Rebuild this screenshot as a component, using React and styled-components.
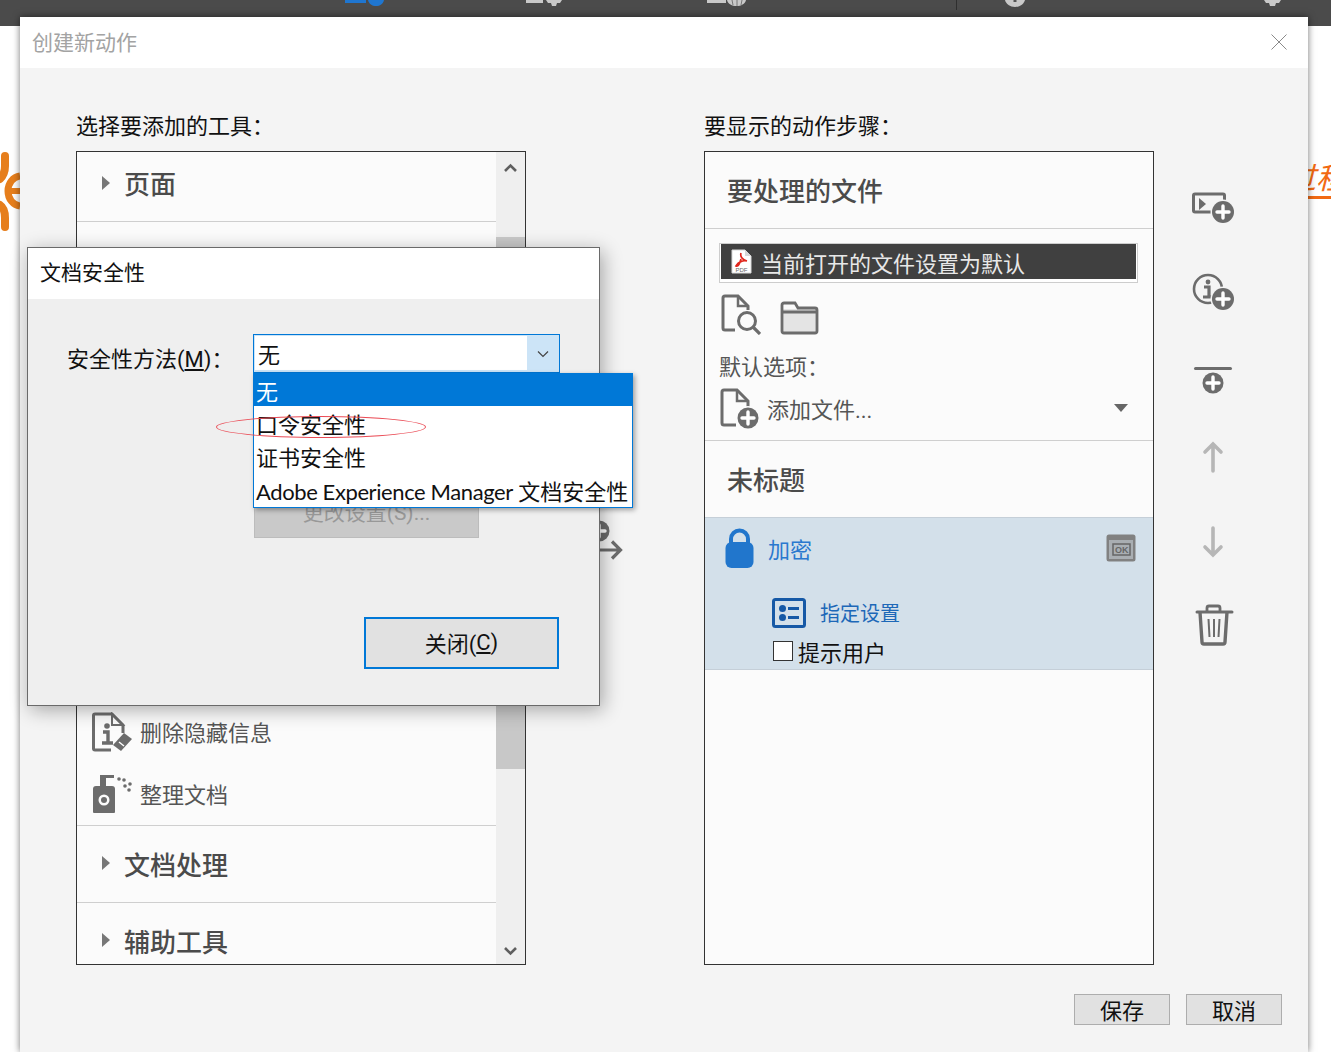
import React from 'react';
import styled, { createGlobalStyle } from 'styled-components';

const FONT = 'Roboto, "Noto Sans CJK SC", "Noto Sans", sans-serif';

const GlobalStyle = createGlobalStyle`
  html, body {
    margin: 0;
    padding: 0;
    background: #fff;
    font-family: ${FONT};
  }
  * { box-sizing: border-box; }
`;

const Page = styled.div`
  position: relative;
  width: 1331px;
  height: 1052px;
  overflow: hidden;
  background: #fff;
`;

const TopBar = styled.div`
  display: flex;
  align-items: flex-start;
  height: 26px;
  background: #4b4b4b;
`;

const TopGlyph = styled.svg`
  display: block;
  flex: none;
  margin-left: ${p => p.$ml}px;
`;

const TopDivider = styled.div`
  flex: none;
  width: 1px;
  height: 10px;
  margin-left: ${p => p.$ml}px;
  background: #2f2f2f;
`;

const BackdropLogo = styled.svg`
  position: absolute;
  left: 0;
  top: 150px;
`;

const BackdropLink = styled.span`
  position: absolute;
  left: 1286px;
  top: 162px;
  color: #f26a13;
  font-size: 30px;
  line-height: 34px;
  font-style: italic;
  white-space: nowrap;
  border-bottom: 3px solid #f26a13;
`;

const Modal = styled.div`
  position: absolute;
  left: 20px;
  top: 17px;
  width: 1288px;
  height: 1035px;
  display: flex;
  flex-direction: column;
  background: #f4f4f4;
  box-shadow: 0 0 7px rgba(0, 0, 0, 0.55);
`;

const ModalHeader = styled.div`
  display: flex;
  align-items: center;
  justify-content: space-between;
  height: 51px;
  padding: 0 20px 0 12px;
  background: #fff;
`;

const ModalTitle = styled.div`
  margin-bottom: 4px;
  font-size: 21px;
  color: #a3a3a3;
`;

const CloseGlyph = styled.svg`
  display: block;
  margin-bottom: 2px;
`;

const ModalBody = styled.div`
  display: flex;
  flex-direction: column;
  padding: 40px 26px 0 56px;
`;

const Columns = styled.div`
  display: flex;
  align-items: flex-start;
`;

const Column = styled.div`
  flex: none;
  width: 450px;
`;

const ColumnLabel = styled.div`
  height: 43px;
  font-size: 22px;
  line-height: 38px;
  color: #111;
  white-space: nowrap;
`;

const ListBox = styled.div`
  display: flex;
  height: 814px;
  border: 1px solid #333;
  background: #fbfbfb;
  overflow: hidden;
`;

const ListContent = styled.div`
  flex: none;
  width: 419px;
`;

const GroupRow = styled.div`
  display: flex;
  align-items: center;
  height: ${p => p.$h}px;
  padding: ${p => p.$pt || 0}px 0 ${p => p.$pb || 0}px 25px;
  border-bottom: ${p => (p.$last ? 'none' : '1px solid #cfcfcf')};
`;

const GroupDivider = styled.div`
  height: 1px;
  background: #cfcfcf;
`;

const Caret = styled.span`
  flex: none;
  width: 0;
  height: 0;
  margin: -4px 14px 0 0;
  border-left: 8px solid #777;
  border-top: 7px solid transparent;
  border-bottom: 7px solid transparent;
`;

const GroupTitle = styled.div`
  margin-bottom: 4px;
  font-size: 26px;
  font-weight: 500;
  color: #4b4b4b;
  white-space: nowrap;
`;

const HiddenGroups = styled.div`
  height: 479px;
`;

const ToolRow = styled.div`
  display: flex;
  align-items: center;
  height: ${p => p.$h}px;
  padding-left: 15px;
  font-size: 22px;
  color: #555;
  white-space: nowrap;
`;

const ToolLabel = styled.span`
  margin-bottom: 2px;
`;

const ToolIcon = styled.svg`
  display: block;
  flex: none;
  margin-right: 6px;
`;

const ScrollTrack = styled.div`
  position: relative;
  flex: none;
  width: 29px;
  background: #efefef;
`;

const ScrollThumb = styled.div`
  position: absolute;
  left: 0;
  right: 0;
  top: 85px;
  height: 532px;
  background: #c8c8c8;
`;

const ScrollArrow = styled.svg`
  position: absolute;
  left: 7px;
  ${p => (p.$down ? 'bottom: 7px;' : 'top: 10px;')}
`;

const Transfer = styled.div`
  flex: none;
  width: 178px;
  padding: 410px 0 0 53px;
`;

const StepHeading = styled.div`
  display: flex;
  align-items: center;
  height: ${p => p.$h}px;
  padding: 0 0 2px 22px;
  font-size: 26px;
  font-weight: 500;
  color: #4b4b4b;
  border-bottom: ${p => (p.$line ? '1px solid #cfcfcf' : 'none')};
`;

const StepsBox = styled.div`
  height: 814px;
  border: 1px solid #333;
  background: #fbfbfb;
  overflow: hidden;
`;

const FileSection = styled.div`
  height: 212px;
  padding: 14px 16px 0 14px;
  border-bottom: 1px solid #cfcfcf;
`;

const FileField = styled.div`
  height: 40px;
  width: 419px;
  padding: 0 1px 3px;
  border: 1px solid #cdcdcd;
  background: #fff;
`;

const FileValue = styled.div`
  display: flex;
  align-items: center;
  height: 35px;
  padding-left: 10px;
  background: #404040;
  color: #e8e8e8;
  font-size: 22px;
  white-space: nowrap;
`;

const PdfIcon = styled.svg`
  display: block;
  flex: none;
  margin-right: 9px;
`;

const FileTools = styled.div`
  display: flex;
  align-items: flex-end;
  gap: 19px;
  height: 52px;
  padding-left: 2px;
`;

const FileIcon = styled.svg`
  display: block;
  flex: none;
`;

const DefaultLabel = styled.div`
  margin-top: 18px;
  height: 27px;
  font-size: 22px;
  line-height: 30px;
  color: #555;
`;

const AddRow = styled.div`
  display: flex;
  align-items: center;
  height: 44px;
  margin-top: 6px;
  font-size: 22px;
  color: #555;
`;

const AddLabel = styled.span`
  flex: 1;
  margin-left: 7px;
`;

const MenuCaret = styled.span`
  flex: none;
  width: 0;
  height: 0;
  margin-right: 9px;
  border-top: 8px solid #666;
  border-left: 7px solid transparent;
  border-right: 7px solid transparent;
`;

const ActionPanel = styled.div`
  height: 153px;
  background: #d3e0ea;
  border-top: 1px solid #c5cfd8;
  border-bottom: 1px solid #c5cfd8;
`;

const ActionTop = styled.div`
  display: flex;
  align-items: center;
  height: 60px;
  padding: 0 17px 0 20px;
`;

const ActionName = styled.span`
  flex: 1;
  margin-left: 14px;
  font-size: 22px;
  color: #2a78cf;
`;

const SettingRow = styled.div`
  display: flex;
  align-items: center;
  height: 44px;
  margin-top: 13px;
  padding-left: 67px;
  font-size: 20px;
  color: #1d68b8;
`;

const SettingLabel = styled.span`
  margin: 0 0 2px 14px;
`;

const PromptRow = styled.div`
  display: flex;
  align-items: center;
  height: 32px;
  padding-left: 68px;
  font-size: 22px;
  color: #111;
`;

const Check = styled.span`
  flex: none;
  width: 20px;
  height: 20px;
  margin-right: 5px;
  background: #fff;
  border: 1px solid #333;
`;

const SideTools = styled.div`
  flex: none;
  width: 46px;
  margin: 58px 0 0 36px;
  display: flex;
  flex-direction: column;
`;

const SideIcon = styled.svg`
  display: block;
  flex: none;
`;

const Footer = styled.div`
  display: flex;
  justify-content: flex-end;
  gap: 16px;
  padding-top: 29px;
`;

const FooterButton = styled.div`
  display: flex;
  align-items: center;
  justify-content: center;
  width: 96px;
  height: 31px;
  padding-bottom: 2px;
  background: #e1e1e1;
  border: 1px solid #adadad;
  font-size: 22px;
  color: #111;
`;

const Dialog = styled.div`
  position: absolute;
  left: 27px;
  top: 247px;
  width: 573px;
  height: 459px;
  background: #efefef;
  border: 1px solid #6a6a6a;
  box-shadow: 3px 4px 18px rgba(0, 0, 0, 0.32);
`;

const DialogHeader = styled.div`
  display: flex;
  align-items: center;
  height: 51px;
  padding: 0 0 6px 12px;
  background: #fff;
  font-size: 21px;
  color: #111;
`;

const DialogBody = styled.div`
  display: flex;
  flex-direction: column;
  padding: 35px 40px 0 39px;
`;

const MethodRow = styled.div`
  display: flex;
  align-items: flex-start;
  height: 39px;
`;

const MethodLabel = styled.div`
  flex: none;
  width: 186px;
  margin-top: 7px;
  font-size: 22px;
  color: #111;
  white-space: nowrap;
  u { text-underline-offset: 2px; }
`;

const SelectWrap = styled.div`
  position: relative;
  flex: none;
  width: 307px;
`;

const SelectBox = styled.div`
  display: flex;
  height: 39px;
  border: 1px solid #0078d7;
  background: #cce4f7;
`;

const SelectValue = styled.div`
  flex: 1;
  margin: 1px 0 2px 1px;
  padding-left: 3px;
  background: #fff;
  font-size: 22px;
  line-height: 40px;
  color: #111;
`;

const SelectArrow = styled.div`
  flex: none;
  width: 32px;
  display: flex;
  align-items: center;
  justify-content: center;
`;

const DropList = styled.div`
  position: absolute;
  left: 0;
  top: 39px;
  width: 380px;
  padding-bottom: 2px;
  background: #fff;
  border: 1px solid #0078d7;
  border-top: none;
  box-shadow: 2px 2px 5px rgba(0, 0, 0, 0.35);
  z-index: 2;
`;

const DropItem = styled.div`
  height: 33px;
  padding-left: 2px;
  font-size: 22px;
  line-height: 39px;
  white-space: nowrap;
  color: ${p => (p.$active ? '#fff' : '#111')};
  background: ${p => (p.$active ? '#0078d7' : 'transparent')};
`;

const LatinName = styled.span`
  font-family: Lato, sans-serif;
  letter-spacing: -0.4px;
`;

const Oval = styled.div`
  position: absolute;
  left: -38px;
  top: 43px;
  width: 210px;
  height: 22px;
  border: 1px solid #ea4b55;
  border-radius: 50%;
`;

const SettingsButton = styled.div`
  display: flex;
  align-items: center;
  justify-content: center;
  width: 225px;
  height: 48px;
  margin: 117px 0 0 187px;
  padding-bottom: 6px;
  background: #c9c9c9;
  border: 1px solid #bcbcbc;
  font-size: 21px;
  color: #989898;
`;

const CloseButton = styled.div`
  display: flex;
  align-items: center;
  justify-content: center;
  align-self: flex-end;
  width: 195px;
  height: 52px;
  margin-top: 79px;
  padding-bottom: 2px;
  background: #e1e1e1;
  border: 2px solid #0078d7;
  font-size: 22px;
  color: #111;
  u { text-underline-offset: 2px; }
`;

const gray = '#6c6c6c';
const muted = '#b6b6b6';
const bg = '#f4f4f4';

const PlusBadge = ({ cx, cy, r = 11, ring = bg, fill = gray }) => (
  <g>
    <circle cx={cx} cy={cy} r={r + 1.5} fill={ring} />
    <circle cx={cx} cy={cy} r={r} fill={fill} />
    <path d={`M${cx - 6} ${cy}H${cx + 6}M${cx} ${cy - 6}V${cy + 6}`} stroke="#fff" strokeWidth="3.4" strokeLinecap="round" />
  </g>
);

const ChevronUp = () => (
  <ScrollArrow width="15" height="12" viewBox="0 0 15 12">
    <path d="M2 9l5.5-5.5L13 9" fill="none" stroke="#5f5f5f" strokeWidth="2.6" />
  </ScrollArrow>
);

const ChevronDown = () => (
  <ScrollArrow $down width="15" height="12" viewBox="0 0 15 12">
    <path d="M2 3l5.5 5.5L13 3" fill="none" stroke="#5f5f5f" strokeWidth="2.6" />
  </ScrollArrow>
);

const App = () => {
  return (
    <Page>
      <GlobalStyle />
      <TopBar>
        <TopGlyph $ml={345} width="40" height="7" viewBox="0 0 40 7">
          <rect x="0" y="0" width="21" height="3" fill="#1f76d0" />
          <path d="M23 0h16c-1 4-4 6-8 6s-7-2-8-6z" fill="#1f76d0" />
        </TopGlyph>
        <TopGlyph $ml={141} width="36" height="7" viewBox="0 0 36 7">
          <rect x="0" y="0" width="17" height="3" fill="#c9c9c9" />
          <path d="M20 0h16l-2 3h-3l-1 3h-4l-1-3h-3z" fill="#c9c9c9" />
        </TopGlyph>
        <TopGlyph $ml={145} width="40" height="7" viewBox="0 0 40 7">
          <rect x="0" y="0" width="19" height="3" fill="#c9c9c9" />
          <path d="M20 0h19c-1 4-5 6-9.500 6S21 4 20 0z" fill="#c9c9c9" />
          <path d="M30 0v6M25 0l1 5M35 0l-1 5" stroke="#777" strokeWidth="1" />
        </TopGlyph>
        <TopDivider $ml={209} />
        <TopGlyph $ml={48} width="20" height="7" viewBox="0 0 20 7">
          <path d="M0 0h20c-1 4-5 7-10 7S1 4 0 0z" fill="#c9c9c9" />
          <path d="M10 0v2" stroke="#555" strokeWidth="3" />
        </TopGlyph>
        <TopGlyph $ml={239} width="17" height="7" viewBox="0 0 17 7">
          <path d="M0 0h17l-2 3h-3l-1 3H6L5 3H2z" fill="#c9c9c9" />
        </TopGlyph>
      </TopBar>

      <BackdropLogo width="20" height="90" viewBox="0 0 20 90">
        <path d="M5 6v10c0 6-2 10-5 13" fill="none" stroke="#e67e1c" strokeWidth="8" strokeLinecap="round" />
        <path d="M20 26c-7 1-12 7-12 15s5 14 12 15" fill="none" stroke="#e67e1c" strokeWidth="7" />
        <path d="M10 41h10" stroke="#e67e1c" strokeWidth="6" />
        <path d="M0 55c3 2 5 7 5 13v9" fill="none" stroke="#e67e1c" strokeWidth="8" strokeLinecap="round" />
      </BackdropLogo>
      <BackdropLink>过程</BackdropLink>

      <Modal>
        <ModalHeader>
          <ModalTitle>创建新动作</ModalTitle>
          <CloseGlyph width="18" height="18" viewBox="0 0 18 18">
            <path d="M1.500 1.500l15 15M16.500 1.500l-15 15" stroke="#8a8a8a" strokeWidth="1" />
          </CloseGlyph>
        </ModalHeader>
        <ModalBody>
          <Columns>
            <Column>
              <ColumnLabel>选择要添加的工具：</ColumnLabel>
              <ListBox>
                <ListContent>
                  <GroupRow $h={70} $pb={4}>
                    <Caret />
                    <GroupTitle>页面</GroupTitle>
                  </GroupRow>
                  <HiddenGroups />
                  <ToolRow $h={62}>
                    <ToolIcon width="42" height="40" viewBox="0 0 42 40">
                      <path d="M19 38H3a1.500 1.500 0 0 1-1.500-1.500v-33A1.500 1.500 0 0 1 3 2h17l11 11v8" fill="none" stroke={gray} strokeWidth="3" />
                      <path d="M20 2v11h11z" fill="none" stroke={gray} strokeWidth="2" />
                      <circle cx="15" cy="14" r="2.800" fill={gray} />
                      <path d="M11 20h5v11M10 31h11" fill="none" stroke={gray} strokeWidth="3.400" />
                      <path d="M32 21l8 6-11 12-8-6z" fill={gray} />
                      <path d="M27 30l5 4" stroke="#fff" strokeWidth="1.500" />
                    </ToolIcon>
                    <ToolLabel>删除隐藏信息</ToolLabel>
                  </ToolRow>
                  <ToolRow $h={62}>
                    <ToolIcon width="42" height="40" viewBox="0 0 42 40">
                      <path d="M1 15a3 3 0 0 1 3-3h16a3 3 0 0 1 3 3v23a1 1 0 0 1-1 1H2a1 1 0 0 1-1-1z" fill={gray} />
                      <circle cx="12" cy="26" r="5.500" fill="#fbfbfb" />
                      <circle cx="12" cy="26" r="3" fill={gray} />
                      <path d="M8 12V1h14v3h-8v8z" fill={gray} />
                      <g fill={gray}>
                        <circle cx="27" cy="5" r="1.800" /><circle cx="32" cy="6" r="1.800" />
                        <circle cx="38" cy="10" r="1.800" /><circle cx="33" cy="12" r="1.800" />
                        <circle cx="37" cy="16" r="1.800" />
                      </g>
                    </ToolIcon>
                    <ToolLabel>整理文档</ToolLabel>
                  </ToolRow>
                  <GroupDivider />
                  <GroupRow $h={77} $pt={2}>
                    <Caret />
                    <GroupTitle>文档处理</GroupTitle>
                  </GroupRow>
                  <GroupRow $h={80} $pb={2} $last>
                    <Caret />
                    <GroupTitle>辅助工具</GroupTitle>
                  </GroupRow>
                </ListContent>
                <ScrollTrack>
                  <ScrollThumb />
                  <ChevronUp />
                  <ChevronDown />
                </ScrollTrack>
              </ListBox>
            </Column>

            <Transfer>
              <SideIcon width="44" height="42" viewBox="0 0 44 42">
                <PlusBadge cx={20} cy={13} r={10.500} />
                <path d="M18 32h23M33 23.500l8.500 8.500-8.500 8.500" fill="none" stroke={gray} strokeWidth="3.200" />
              </SideIcon>
            </Transfer>

            <Column>
              <ColumnLabel>要显示的动作步骤：</ColumnLabel>
              <StepsBox>
                <StepHeading $h={77} $line>要处理的文件</StepHeading>
                <FileSection>
                  <FileField>
                    <FileValue>
                      <PdfIcon width="21" height="25" viewBox="0 0 21 25">
                        <path d="M1 1h13l6 6v17H1z" fill="#fff" stroke="#d8d8d8" strokeWidth="1" />
                        <path d="M14 1v6h6z" fill="#d8d8d8" />
                        <path d="M10 4c-1 3 1 7 6 8-4-1-9 1-11 5 3 1 4-4 5-7" fill="none" stroke="#e0261c" strokeWidth="1.700" />
                        <text x="4.500" y="23" fontSize="6" fontFamily="Liberation Sans, sans-serif" fill="#666">PDF</text>
                      </PdfIcon>
                      当前打开的文件设置为默认
                    </FileValue>
                  </FileField>
                  <FileTools>
                    <FileIcon width="40" height="41" viewBox="0 0 40 41">
                      <path d="M14 36H4a2 2 0 0 1-2-2V4a2 2 0 0 1 2-2h13l10 10v4" fill="none" stroke={gray} strokeWidth="3" />
                      <path d="M17 2v10h10" fill="none" stroke={gray} strokeWidth="2.500" />
                      <circle cx="26" cy="27" r="8.500" fill="none" stroke={gray} strokeWidth="3" />
                      <path d="M32 33l7 7" stroke={gray} strokeWidth="3.200" />
                    </FileIcon>
                    <FileIcon width="39" height="34" viewBox="0 0 39 34">
                      <path d="M2 8h35v24H2z" fill="#e4e4e4" />
                      <path d="M2 11V4a2 2 0 0 1 2-2h11l3 5h17a2 2 0 0 1 2 2v21a2 2 0 0 1-2 2H4a2 2 0 0 1-2-2zM2 11h35" fill="none" stroke={gray} strokeWidth="2.800" />
                    </FileIcon>
                  </FileTools>
                  <DefaultLabel>默认选项：</DefaultLabel>
                  <AddRow>
                    <FileIcon width="41" height="41" viewBox="0 0 41 41">
                      <path d="M17 37H5a2 2 0 0 1-2-2V4a2 2 0 0 1 2-2h13l11 11v7" fill="none" stroke={gray} strokeWidth="3" />
                      <path d="M18 2v11h11" fill="none" stroke={gray} strokeWidth="2.500" />
                      <PlusBadge cx={29} cy={30} r={10.500} ring="#fbfbfb" />
                    </FileIcon>
                    <AddLabel>添加文件...</AddLabel>
                    <MenuCaret />
                  </AddRow>
                </FileSection>
                <StepHeading $h={76}>未标题</StepHeading>
                <ActionPanel>
                  <ActionTop>
                    <FileIcon width="29" height="40" viewBox="0 0 29 40">
                      <path d="M6 17V11a8.500 8.500 0 0 1 17 0v6" fill="none" stroke="#2176cc" strokeWidth="4" />
                      <rect x="0.500" y="14" width="28" height="26" rx="6" fill="#2176cc" />
                    </FileIcon>
                    <ActionName>加密</ActionName>
                    <FileIcon width="30" height="28" viewBox="0 0 30 28">
                      <rect x="0.500" y="0.500" width="29" height="27" rx="2.500" fill="#818181" />
                      <rect x="3" y="6" width="24" height="19" fill="#a9aeb2" />
                      <rect x="7" y="10" width="17" height="11" fill="none" stroke="#666" strokeWidth="1.500" />
                      <text x="9" y="19" fontSize="9" fontWeight="700" fontFamily="Liberation Sans, sans-serif" fill="#666">OK</text>
                    </FileIcon>
                  </ActionTop>
                  <SettingRow>
                    <FileIcon width="34" height="30" viewBox="0 0 34 30">
                      <rect x="1.500" y="1.500" width="31" height="27" rx="2" fill="#d3e0ea" stroke="#1659a6" strokeWidth="3" />
                      <circle cx="10.500" cy="10.500" r="3.500" fill="#1659a6" />
                      <circle cx="10.500" cy="19.500" r="3.500" fill="#1659a6" />
                      <path d="M16 10.500h11M16 19.500h11" stroke="#1659a6" strokeWidth="3" />
                    </FileIcon>
                    <SettingLabel>指定设置</SettingLabel>
                  </SettingRow>
                  <PromptRow>
                    <Check />
                    提示用户
                  </PromptRow>
                </ActionPanel>
              </StepsBox>
            </Column>

            <SideTools>
              <SideIcon width="46" height="84" viewBox="0 0 46 84">
                <path d="M22 46H5a1.500 1.500 0 0 1-1.500-1.500v-15A1.500 1.500 0 0 1 5 28h28a1.500 1.500 0 0 1 1.500 1.500V38" fill="none" stroke={gray} strokeWidth="3" strokeLinejoin="round" />
                <path d="M9 32l7 6-7 6z" fill={gray} />
                <PlusBadge cx={33} cy={46} />
              </SideIcon>
              <SideIcon width="46" height="84" viewBox="0 0 46 84">
                <circle cx="18" cy="39" r="14" fill="none" stroke={gray} strokeWidth="2.600" />
                <circle cx="18" cy="32" r="2.400" fill={gray} />
                <path d="M14 37h5v10M13 47h10" fill="none" stroke={gray} strokeWidth="3.200" />
                <PlusBadge cx={33} cy={49} />
              </SideIcon>
              <SideIcon width="46" height="84" viewBox="0 0 46 84">
                <path d="M5.500 34.500h35" stroke={gray} strokeWidth="3" strokeLinecap="round" />
                <PlusBadge cx={23} cy={49} r={10.500} />
              </SideIcon>
              <SideIcon width="46" height="84" viewBox="0 0 46 84">
                <path d="M23 26v27M15 34l8-8 8 8" fill="none" stroke={muted} strokeWidth="3.600" strokeLinecap="round" />
              </SideIcon>
              <SideIcon width="46" height="84" viewBox="0 0 46 84">
                <path d="M23 26v27M15 45l8 8 8-8" fill="none" stroke={muted} strokeWidth="3.600" strokeLinecap="round" />
              </SideIcon>
              <SideIcon width="46" height="84" viewBox="0 0 46 84">
                <path d="M7 26h35" stroke={gray} strokeWidth="3" strokeLinecap="round" />
                <path d="M17 26v-4a2 2 0 0 1 2-2h9a2 2 0 0 1 2 2v4" fill="none" stroke={gray} strokeWidth="2.800" />
                <path d="M10 26l2 30a2 2 0 0 0 2 2h19a2 2 0 0 0 2-2l2-30" fill="none" stroke={gray} strokeWidth="3.400" />
                <path d="M18.500 33l1 18M24 33v18M29.500 33l-1 18" stroke={gray} strokeWidth="2" />
              </SideIcon>
            </SideTools>
          </Columns>
          <Footer>
            <FooterButton>保存</FooterButton>
            <FooterButton>取消</FooterButton>
          </Footer>
        </ModalBody>
      </Modal>

      <Dialog>
        <DialogHeader>文档安全性</DialogHeader>
        <DialogBody>
          <MethodRow>
            <MethodLabel>安全性方法(<u>M</u>)：</MethodLabel>
            <SelectWrap>
              <SelectBox>
                <SelectValue>无</SelectValue>
                <SelectArrow>
                  <svg width="12" height="8" viewBox="0 0 12 8">
                    <path d="M1 1.500l5 5 5-5" fill="none" stroke="#444" strokeWidth="1.200" />
                  </svg>
                </SelectArrow>
              </SelectBox>
              <DropList>
                <DropItem $active>无</DropItem>
                <DropItem>口令安全性</DropItem>
                <DropItem>证书安全性</DropItem>
                <DropItem><LatinName>Adobe Experience Manager</LatinName> 文档安全性</DropItem>
                <Oval />
              </DropList>
            </SelectWrap>
          </MethodRow>
          <SettingsButton>更改设置(S)...</SettingsButton>
          <CloseButton>关闭(<u>C</u>)</CloseButton>
        </DialogBody>
      </Dialog>
    </Page>
  );
};

export default App;
